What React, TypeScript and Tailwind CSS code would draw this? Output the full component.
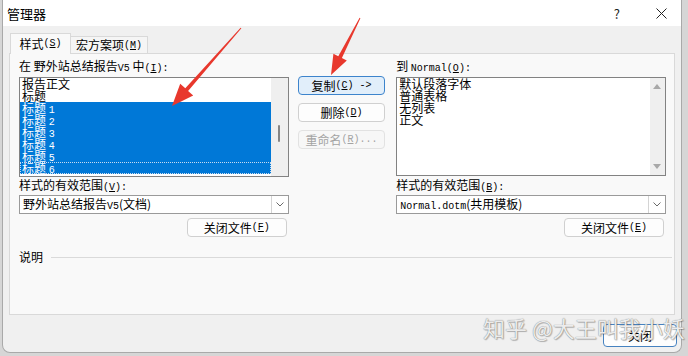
import React from "react";

function M({ children }: { children: React.ReactNode }) {
  return <span className="font-['Liberation_Mono',monospace] text-[10px]">{children}</span>;
}

function ListRow({ text, selected, focus }: { text: React.ReactNode; selected?: boolean; focus?: boolean }) {
  return (
    <div
      className={
        "h-[12px] leading-[12px] px-[2px] whitespace-nowrap " +
        (selected ? "bg-[#0078d7] text-white " : "") +
        (focus ? "outline outline-1 outline-dotted outline-[#c8dcf0] -outline-offset-1" : "")
      }
    >
      {text}
    </div>
  );
}

function Btn({ children, primary, disabled, className }: { children: React.ReactNode; primary?: boolean; disabled?: boolean; className?: string }) {
  return (
    <div
      className={
        "h-[19px] rounded-[4px] border flex items-center justify-center leading-none " +
        (primary
          ? "bg-[#e1eefa] border-[#3d84cc] "
          : disabled
          ? "bg-[#f7f7f7] border-[#e2e2e2] text-[#a3a3a3] "
          : "bg-[#fdfdfd] border-[#d0d0d0] ") +
        (className ?? "")
      }
    >
      {children}
    </div>
  );
}

function Combo({ children }: { children: React.ReactNode }) {
  return (
    <div className="mt-[2px] h-[19px] border border-[#9a9a9a] bg-white flex items-center">
      <div className="flex-1 pl-[3px] leading-none whitespace-nowrap">{children}</div>
      <div className="w-[17px] h-full border-l border-[#d4d4d4] flex items-center justify-center">
        <svg width="8" height="5" viewBox="0 0 8 5">
          <path d="M0.5 0.5L4 4L7.5 0.5" stroke="#6a6a6a" strokeWidth="1" fill="none" />
        </svg>
      </div>
    </div>
  );
}

export default function App() {
  return (
    <div className="w-[688px] h-[356px] bg-[#d6d6d6] overflow-hidden relative font-['Noto_Sans_CJK_SC',sans-serif] text-[12px] text-black">
      <div className="ml-[2px] w-[680px] h-[353px] bg-[#f0f0f0] border border-t-0 border-[#a9a9a9] rounded-b-[8px] flex flex-col overflow-hidden">
        {/* Title bar */}
        <div className="h-[26px] bg-white flex items-center pl-[4px] pr-[14px] shrink-0">
          <span className="text-[13px] leading-none">管理器</span>
          <span className="ml-auto mr-[36px] text-[13px] leading-none text-[#222]">?</span>
          <svg width="11" height="11" viewBox="0 0 11 11">
            <path d="M0.5 0.5L10.5 10.5M10.5 0.5L0.5 10.5" stroke="#222" strokeWidth="1" />
          </svg>
        </div>

        {/* Tabs */}
        <div className="pt-[7px] pl-[7px] flex items-end -mb-px relative z-10">
          <div className="w-[61px] h-[21px] bg-[#f9f9f9] border border-b-0 border-[#d9d9d9] flex items-center justify-center pb-px">
            样式<M>(<u>S</u>)</M>
          </div>
          <div className="w-[77px] h-[18px] bg-[#f5f5f5] border border-l-0 border-[#d9d9d9] flex items-center justify-center">
            宏方案项<M>(<u>M</u>)</M>
          </div>
        </div>

        {/* Tab panel */}
        <div className="mx-[6px] h-[262px] border border-[#d9d9d9] bg-[#f9f9f9] pl-[9px] pr-[8px] pt-[4px] shrink-0">
          <div className="flex">
            {/* Left column */}
            <div className="w-[272px] flex flex-col">
              <div className="h-[16px] leading-[16px] whitespace-nowrap">
                在 野外站总结报告<M>V5</M> 中<M>(<u>I</u>):</M>
              </div>
              <div className="mt-[3px] h-[100px] border border-[#828282] bg-white flex">
                <div className="flex-1 flex flex-col">
                  <ListRow text="报告正文" />
                  <ListRow text="标题" />
                  <ListRow text={<>标题 <M>1</M></>} selected />
                  <ListRow text={<>标题 <M>2</M></>} selected />
                  <ListRow text={<>标题 <M>3</M></>} selected />
                  <ListRow text={<>标题 <M>4</M></>} selected />
                  <ListRow text={<>标题 <M>5</M></>} selected />
                  <ListRow text={<>标题 <M>6</M></>} selected focus />
                </div>
                <div className="w-[17px] bg-[#efefef] flex justify-center">
                  <div className="mt-[47px] w-[2px] h-[17px] bg-[#858585] rounded" />
                </div>
              </div>
              <div className="h-[16px] leading-[16px] whitespace-nowrap">
                样式的有效范围<M>(<u>V</u>):</M>
              </div>
              <Combo>
                野外站总结报告<M>V5</M>(文档)
              </Combo>
              <div className="mt-[4px] flex justify-end pr-[2px]">
                <Btn className="w-[100px]">
                  关闭文件<M>(<u>F</u>)</M>
                </Btn>
              </div>
            </div>

            {/* Middle buttons */}
            <div className="ml-[9px] w-[88px] pt-[18px] flex flex-col gap-[8px]">
              <Btn primary>
                复制<M>(<u>C</u>) -&gt;</M>
              </Btn>
              <Btn>
                删除<M>(<u>D</u>)</M>
              </Btn>
              <Btn disabled>
                重命名<M>(<u>R</u>)...</M>
              </Btn>
            </div>

            {/* Right column */}
            <div className="ml-[11px] w-[272px] flex flex-col">
              <div className="h-[16px] leading-[16px] whitespace-nowrap">
                到 <M>Normal(<u>O</u>):</M>
              </div>
              <div className="mt-[3px] h-[99px] border border-[#828282] bg-white flex">
                <div className="flex-1 flex flex-col">
                  <ListRow text="默认段落字体" />
                  <ListRow text="普通表格" />
                  <ListRow text="无列表" />
                  <ListRow text="正文" />
                </div>
                <div className="w-[15px] bg-[#efefef] flex flex-col items-center justify-between py-[6px]">
                  <svg width="8" height="5" viewBox="0 0 8 5">
                    <path d="M0 5L4 0L8 5Z" fill="#a8a8a8" />
                  </svg>
                  <svg width="8" height="5" viewBox="0 0 8 5">
                    <path d="M0 0L4 5L8 0Z" fill="#a8a8a8" />
                  </svg>
                </div>
              </div>
              <div className="mt-px h-[16px] leading-[16px] whitespace-nowrap">
                样式的有效范围<M>(<u>B</u>):</M>
              </div>
              <Combo>
                <M>Normal.dotm</M>(共用模板)
              </Combo>
              <div className="mt-[4px] flex justify-end pr-[2px]">
                <Btn className="w-[100px]">
                  关闭文件<M>(<u>E</u>)</M>
                </Btn>
              </div>
            </div>
          </div>

          {/* 说明 */}
          <div className="mt-[12px] h-[16px] flex items-center -mr-[6px]">
            <span className="leading-none">说明</span>
            <div className="ml-[8px] flex-1 h-px bg-[#dadada]" />
          </div>
        </div>

        {/* Footer */}
        <div className="pt-[9px] pr-[4px] flex justify-end">
          <div className="w-[74px] h-[23px] rounded-[4px] border border-[#4682c0] bg-[#fdfdfd] flex items-center justify-center leading-none">
            关闭
          </div>
        </div>
      </div>

      {/* Watermark */}
      <div className="absolute left-[483px] top-[316px] text-[22px] leading-none text-[#ececec] whitespace-nowrap [text-shadow:0_0_1px_#6a6a6a,1px_1px_1px_rgba(0,0,0,0.25)]">
        知乎 @大王叫我小妖
      </div>

      {/* Red annotation arrows */}
      <svg className="absolute left-0 top-0 pointer-events-none" width="688" height="356" viewBox="0 0 688 356">
        <polygon
          points="240.6,27.7 185.3,88.3 180.2,83.8 172,106 193.2,95.4 188.1,90.9 241.4,28.3"
          fill="#e8382d"
        />
        <polygon
          points="359.6,17.8 338.3,56.3 333.4,53.8 331,75 346.8,60.6 341.9,58.1 360.4,18.2"
          fill="#e8382d"
        />
      </svg>
    </div>
  );
}
